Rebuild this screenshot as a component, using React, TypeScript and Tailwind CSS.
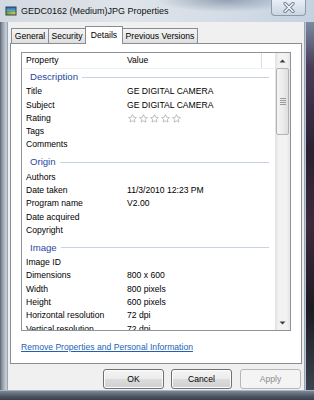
import React from 'react';

const Star = () => (
  <svg width="9" height="9" viewBox="0 0 20 20">
    <path
      d="M10 1.5l2.6 5.6 6.1.7-4.5 4.2 1.2 6-5.4-3-5.4 3 1.2-6L1.3 7.8l6.1-.7z"
      fill="#fff"
      stroke="#a6a6a6"
      strokeWidth="1.6"
      strokeLinejoin="round"
    />
  </svg>
);

const Stars = () => (
  <div className="flex gap-[2px] pl-[1px]">
    <Star />
    <Star />
    <Star />
    <Star />
    <Star />
  </div>
);

type Item = [string, React.ReactNode];
const groups: { name: string; items: Item[] }[] = [
  {
    name: 'Description',
    items: [
      ['Title', 'GE DIGITAL CAMERA'],
      ['Subject', 'GE DIGITAL CAMERA'],
      ['Rating', <Stars />],
      ['Tags', ''],
      ['Comments', ''],
    ],
  },
  {
    name: 'Origin',
    items: [
      ['Authors', ''],
      ['Date taken', '11/3/2010 12:23 PM'],
      ['Program name', 'V2.00'],
      ['Date acquired', ''],
      ['Copyright', ''],
    ],
  },
  {
    name: 'Image',
    items: [
      ['Image ID', ''],
      ['Dimensions', '800 x 600'],
      ['Width', '800 pixels'],
      ['Height', '600 pixels'],
      ['Horizontal resolution', '72 dpi'],
      ['Vertical resolution', '72 dpi'],
    ],
  },
];

const Row = ({ k, v }: { k: string; v: React.ReactNode }) => (
  <div className="flex h-[13.3px] shrink-0 items-center">
    <div className="w-[101px] whitespace-nowrap pl-[4px]">{k}</div>
    <div className="whitespace-nowrap pl-[4px]">{v}</div>
  </div>
);

const Arrow = ({ up }: { up?: boolean }) => (
  <svg width="7" height="4" viewBox="0 0 7 4">
    <path d={up ? 'M0.5 3.5 L3.5 0.5 L6.5 3.5 Z' : 'M0.5 0.5 L3.5 3.5 L6.5 0.5 Z'} fill="#404040" />
  </svg>
);

const Scrollbar = () => (
  <div className="flex w-[15px] shrink-0 flex-col bg-[linear-gradient(90deg,#e2e2e2_0%,#f2f2f2_25%,#f2f2f2_75%,#e6e6e6_100%)]">
    <div className="flex h-[15px] items-center justify-center">
      <Arrow up />
    </div>
    <div className="mx-[1px] flex h-[67px] flex-col items-center justify-center gap-[1px] rounded-[2px] border border-[#b2b2b2] bg-[linear-gradient(90deg,#f4f4f4_0%,#ececec_50%,#dedede_100%)]">
      <div className="h-px w-[6px] bg-[#9a9a9a]" />
      <div className="h-px w-[6px] bg-[#9a9a9a]" />
      <div className="h-px w-[6px] bg-[#9a9a9a]" />
      <div className="h-px w-[6px] bg-[#9a9a9a]" />
    </div>
    <div className="flex-1" />
    <div className="flex h-[15px] items-center justify-center">
      <Arrow />
    </div>
  </div>
);

const TitleIcon = () => (
  <svg width="12" height="10" viewBox="0 0 12 10">
    <defs>
      <linearGradient id="sky" x1="0" y1="0" x2="0" y2="1">
        <stop offset="0" stopColor="#2f6fa8" />
        <stop offset="1" stopColor="#5bb7d6" />
      </linearGradient>
      <linearGradient id="ground" x1="0" y1="0" x2="1" y2="0">
        <stop offset="0" stopColor="#6fa43a" />
        <stop offset="1" stopColor="#d8c24a" />
      </linearGradient>
    </defs>
    <rect x="0.5" y="0.5" width="11" height="9" fill="#29425e" />
    <rect x="1.5" y="1.5" width="9" height="4" fill="url(#sky)" />
    <rect x="1.5" y="5.5" width="9" height="3" fill="url(#ground)" />
  </svg>
);

const CloseX = () => (
  <svg width="12" height="11" viewBox="0 0 12 11">
    <path d="M2 1.5 L10 9.5 M10 1.5 L2 9.5" stroke="#6f7b8b" strokeWidth="3.2" strokeLinecap="round" />
    <path d="M2 1.5 L10 9.5 M10 1.5 L2 9.5" stroke="#f2f5f8" strokeWidth="1.6" strokeLinecap="round" />
  </svg>
);

const Tab = ({ label, w, selected, first }: { label: string; w: string; selected?: boolean; first?: boolean }) => (
  <div
    className={
      (selected
        ? 'relative z-10 -mb-px h-[18px] bg-white '
        : 'h-[15px] bg-[linear-gradient(180deg,#f3f3f3_0%,#ebebeb_50%,#dedede_100%)] ') +
      (first ? '' : '-ml-px ') +
      w +
      ' flex items-center justify-center whitespace-nowrap border border-b-0 border-[#898c95] text-black'
    }
  >
    {label}
  </div>
);

const Button = ({ label, disabled, cls }: { label: string; disabled?: boolean; cls?: string }) => (
  <div
    className={
      'flex h-[20px] w-[61px] items-center justify-center rounded-[3px] border ' +
      (disabled
        ? 'border-[#b5b8bb] bg-[#f4f4f4] text-[#8d8d8d] '
        : 'border-[#707070] bg-[linear-gradient(180deg,#f4f4f4_0%,#ececec_48%,#dcdcdc_52%,#d0d0d0_100%)] text-black shadow-[inset_0_0_0_1px_#fcfcfc] ') +
      (cls || '')
    }
  >
    {label}
  </div>
);

export default function App() {
  return (
    <div className="flex h-[400px] w-[314px] flex-col overflow-hidden font-['Liberation_Sans',Arial,sans-serif] text-[8.6px] text-black">
      {/* Title bar */}
      <div className="flex h-[22px] shrink-0 items-start bg-[radial-gradient(ellipse_70px_12px_at_72%_0%,rgba(70,90,120,0.45),rgba(70,90,120,0)),linear-gradient(90deg,#d3d9e0_0%,#dfe4ea_40%,#d2dbe5_75%,#c4d2e0_100%)]">
        <div className="flex h-full items-center pl-[5px]">
          <TitleIcon />
          <span className="ml-[4px] whitespace-nowrap text-[9px] leading-none text-[#111]">
            GEDC0162 (Medium)JPG Properties
          </span>
        </div>
        <div className="flex-1" />
        <div className="mr-[8px] flex h-[16px] w-[35px] items-center justify-center rounded-b-[4px] border border-t-0 border-[#8d9aab] bg-[linear-gradient(180deg,#e9eff5_0%,#d9e2ec_50%,#c9d6e3_100%)]">
          <CloseX />
        </div>
      </div>

      <div className="flex h-[368px] shrink-0">
        {/* left frame */}
        <div className="w-[7px] shrink-0 bg-[linear-gradient(90deg,#5e6670_0%,#8d97a3_30%,#b7c0ca_70%,#c9d0d8_100%)]" />

        {/* client */}
        <div className="flex w-[298px] shrink-0 flex-col border-l border-r border-[#98a4b2] bg-[#f0f0f0]">
          {/* tabs */}
          <div className="mt-[4px] flex h-[17px] items-end pl-[3px]">
            <Tab label="General" w="w-[38px]" first />
            <Tab label="Security" w="w-[38px]" />
            <Tab label="Details" w="w-[38px]" selected />
            <Tab label="Previous Versions" w="w-[76px]" />
          </div>

          {/* panel */}
          <div className="ml-[2px] flex h-[321px] w-[292px] flex-col border border-[#898c95] bg-white px-[10px] pt-[8px]">
            <div className="flex h-[279px] shrink-0 border border-[#8e949c] bg-white">
              <div className="flex flex-1 flex-col overflow-hidden">
                <div className="flex h-[16px] shrink-0 items-center border-b border-[#eef0f2]">
                  <div className="w-[101px] pl-[4px]">Property</div>
                  <div className="flex h-full w-[139px] items-center border-r border-[#dedede] pl-[4px]">Value</div>
                </div>
                {groups.map((g, gi) => (
                  <div key={g.name} className="flex shrink-0 flex-col">
                    <div className={'flex h-[16px] shrink-0 items-center pl-[8px] pr-[6px] ' + (gi === 0 ? '' : 'mt-[3px]')}>
                      <span className="whitespace-nowrap text-[9.6px] text-[#2848a0]">{g.name}</span>
                      <div className="ml-[4px] h-px flex-1 bg-[#c7d3e1]" />
                    </div>
                    {g.items.map(([k, v]) => (
                      <Row key={k} k={k} v={v} />
                    ))}
                  </div>
                ))}
              </div>
              <Scrollbar />
            </div>
            <div className="mt-[10px] whitespace-nowrap leading-[12px] text-[#1f62b5] underline">
              Remove Properties and Personal Information
            </div>
          </div>

          {/* buttons */}
          <div className="mt-[5px] flex justify-end pr-[3px]">
            <Button label="OK" />
            <Button label="Cancel" cls="ml-[7px]" />
            <Button label="Apply" disabled cls="ml-[8px]" />
          </div>
        </div>

        {/* right frame */}
        <div className="w-[9px] shrink-0 border-l border-[#b9c5d2] bg-[linear-gradient(180deg,#7c8aa0_0%,#4a3c58_12%,#2a2032_35%,#3d2a3c_55%,#1c1a22_78%,#3c4350_100%)]" />
      </div>

      {/* bottom frame */}
      <div className="h-[10px] shrink-0 border-t border-[#aab4c0] bg-[linear-gradient(180deg,#7d8896_0%,#4b5461_60%,#3a414c_100%)]" />
    </div>
  );
}
